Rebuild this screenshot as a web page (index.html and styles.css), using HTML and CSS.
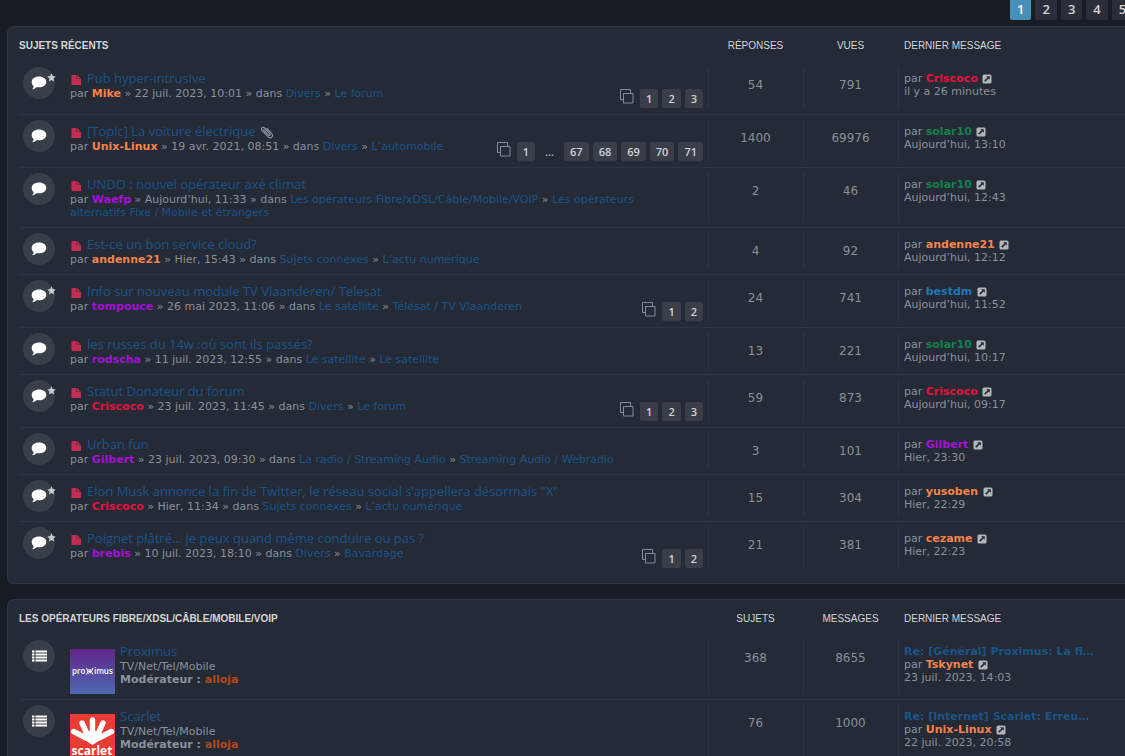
FILE: index.html
```html
<!DOCTYPE html>
<html lang="fr">
<head>
<meta charset="utf-8">
<title>Forum - Sujets récents</title>
<link rel="stylesheet" href="styles.css">
</head>
<body>
<svg class="sprite" aria-hidden="true">
  <symbol id="comment" viewBox="0 0 16 14"><path d="M8 .6c4.200 0 7.300 2.300 7.300 5.300s-3.100 5.300-7.300 5.300c-.7 0-1.400 0-2-.2-1.300 1.200-3 2-4.900 2.200.9-1 1.500-2.100 1.500-3.300C1.300 9 .7 7.500.7 5.900.7 2.900 3.800.6 8 .6z"/></symbol>
  <symbol id="star" viewBox="0 0 10 10"><path d="M5 .4l1.400 3 3.300.4-2.400 2.300.6 3.300L5 7.800 2.100 9.400l.6-3.300L.3 3.800l3.300-.4z"/></symbol>
  <symbol id="file" viewBox="0 0 10 12"><path d="M.5 1h5v4H10v6H.5zM6 1l3.800 3.500H6z"/></symbol>
  <symbol id="jump" viewBox="0 0 10 10"><rect x=".5" y=".5" width="9" height="9" rx="1.500"/><path d="M4.200 2.200h3.600v3.600L6.600 4.600 3.400 7.800 2.200 6.600l3.200-3.200z" fill="#242a36"/></symbol>
  <symbol id="pages" viewBox="0 0 15 15"><path d="M4 10.500H1.500v-10h10V4M4.500 4.500h9.500v9.500H4.500z" fill="none" stroke="currentColor"/></symbol>
  <symbol id="clip" viewBox="0 0 14 14"><path d="M3.400 4.500l5 5.600c1 1 2.300-.1 1.400-1.200L4.600 3C2.900 1.200.3 3.400 2 5.300l6 6.500c2.600 2.600 6-.4 3.800-3.100L6.600 3" fill="none" stroke="currentColor" stroke-width="1.200"/></symbol>
  <symbol id="list" viewBox="0 0 15 12"><path d="M0 .5h2.500v2H0zM3.500.5H15v2H3.500zM0 3.500h2.500v2H0zM3.500 3.500H15v2H3.500zM0 6.500h2.500v2H0zM3.500 6.500H15v2H3.500zM0 9.500h2.500v2H0zM3.500 9.500H15v2H3.500z"/></symbol>
</svg>

<nav class="pager" aria-label="Pages">
  <a class="current" href="#">1</a><a href="#">2</a><a href="#">3</a><a href="#">4</a><a href="#">5</a>
</nav>

<section class="card">
<table>
<colgroup><col class="c-icon"><col><col class="c-num"><col class="c-num"><col class="c-last"></colgroup>
<thead><tr><th class="heading" colspan="2">Sujets récents</th><th>Réponses</th><th>Vues</th><th class="left">Dernier message</th></tr></thead>
<tbody>
<tr><td class="status"><span class="disc"><svg class="i-comment"><use href="#comment"/></svg><svg class="i-star"><use href="#star"/></svg></span></td>
<td><div class="topic paged"><div class="text"><div class="title"><svg class="i-file"><use href="#file"/></svg><a href="#">Pub hyper-intrusive</a></div><div>par <a class="user orange" href="#">Mike</a> » 22 juil. 2023, 10:01 » dans <a href="#">Divers</a> » <a href="#">Le forum</a></div></div><div class="pages"><svg class="i-pages"><use href="#pages"/></svg><a href="#">1</a><a href="#">2</a><a href="#">3</a></div></div></td>
<td class="num">54</td><td class="num">791</td><td class="last">par <a class="user red" href="#">Criscoco</a> <svg class="i-jump"><use href="#jump"/></svg><br>il y a 26 minutes</td></tr>

<tr><td class="status"><span class="disc"><svg class="i-comment"><use href="#comment"/></svg></span></td>
<td><div class="topic paged"><div class="text"><div class="title"><svg class="i-file"><use href="#file"/></svg><a href="#">[Topic] La voiture électrique</a><svg class="i-clip"><use href="#clip"/></svg></div><div>par <a class="user orange" href="#">Unix-Linux</a> » 19 avr. 2021, 08:51 » dans <a href="#">Divers</a> » <a href="#">L’automobile</a></div></div><div class="pages"><svg class="i-pages"><use href="#pages"/></svg><a href="#">1</a><span>…</span><a href="#">67</a><a href="#">68</a><a href="#">69</a><a href="#">70</a><a href="#">71</a></div></div></td>
<td class="num">1400</td><td class="num">69976</td><td class="last">par <a class="user green" href="#">solar10</a> <svg class="i-jump"><use href="#jump"/></svg><br>Aujourd’hui, 13:10</td></tr>

<tr><td class="status"><span class="disc"><svg class="i-comment"><use href="#comment"/></svg></span></td>
<td><div class="topic"><div class="text"><div class="title"><svg class="i-file"><use href="#file"/></svg><a href="#">UNDO : nouvel opérateur axé climat</a></div><div>par <a class="user purple" href="#">Waefp</a> » Aujourd’hui, 11:33 » dans <a href="#">Les opérateurs Fibre/xDSL/Câble/Mobile/VOIP</a> » <a href="#">Les opérateurs alternatifs Fixe / Mobile et étrangers</a></div></div></div></td>
<td class="num">2</td><td class="num">46</td><td class="last">par <a class="user green" href="#">solar10</a> <svg class="i-jump"><use href="#jump"/></svg><br>Aujourd’hui, 12:43</td></tr>

<tr><td class="status"><span class="disc"><svg class="i-comment"><use href="#comment"/></svg></span></td>
<td><div class="topic"><div class="text"><div class="title"><svg class="i-file"><use href="#file"/></svg><a href="#">Est-ce un bon service cloud?</a></div><div>par <a class="user orange" href="#">andenne21</a> » Hier, 15:43 » dans <a href="#">Sujets connexes</a> » <a href="#">L’actu numérique</a></div></div></div></td>
<td class="num">4</td><td class="num">92</td><td class="last">par <a class="user orange" href="#">andenne21</a> <svg class="i-jump"><use href="#jump"/></svg><br>Aujourd’hui, 12:12</td></tr>

<tr><td class="status"><span class="disc"><svg class="i-comment"><use href="#comment"/></svg><svg class="i-star"><use href="#star"/></svg></span></td>
<td><div class="topic paged"><div class="text"><div class="title"><svg class="i-file"><use href="#file"/></svg><a href="#">Info sur nouveau module TV Vlaanderen/ Telesat</a></div><div>par <a class="user purple" href="#">tompouce</a> » 26 mai 2023, 11:06 » dans <a href="#">Le satellite</a> » <a href="#">Télésat / TV Vlaanderen</a></div></div><div class="pages"><svg class="i-pages"><use href="#pages"/></svg><a href="#">1</a><a href="#">2</a></div></div></td>
<td class="num">24</td><td class="num">741</td><td class="last">par <a class="user blue" href="#">bestdm</a> <svg class="i-jump"><use href="#jump"/></svg><br>Aujourd’hui, 11:52</td></tr>

<tr><td class="status"><span class="disc"><svg class="i-comment"><use href="#comment"/></svg></span></td>
<td><div class="topic"><div class="text"><div class="title"><svg class="i-file"><use href="#file"/></svg><a href="#">les russes du 14w :où sont ils passés?</a></div><div>par <a class="user purple" href="#">rodscha</a> » 11 juil. 2023, 12:55 » dans <a href="#">Le satellite</a> » <a href="#">Le satellite</a></div></div></div></td>
<td class="num">13</td><td class="num">221</td><td class="last">par <a class="user green" href="#">solar10</a> <svg class="i-jump"><use href="#jump"/></svg><br>Aujourd’hui, 10:17</td></tr>

<tr><td class="status"><span class="disc"><svg class="i-comment"><use href="#comment"/></svg><svg class="i-star"><use href="#star"/></svg></span></td>
<td><div class="topic paged"><div class="text"><div class="title"><svg class="i-file"><use href="#file"/></svg><a href="#">Statut Donateur du forum</a></div><div>par <a class="user red" href="#">Criscoco</a> » 23 juil. 2023, 11:45 » dans <a href="#">Divers</a> » <a href="#">Le forum</a></div></div><div class="pages"><svg class="i-pages"><use href="#pages"/></svg><a href="#">1</a><a href="#">2</a><a href="#">3</a></div></div></td>
<td class="num">59</td><td class="num">873</td><td class="last">par <a class="user red" href="#">Criscoco</a> <svg class="i-jump"><use href="#jump"/></svg><br>Aujourd’hui, 09:17</td></tr>

<tr><td class="status"><span class="disc"><svg class="i-comment"><use href="#comment"/></svg></span></td>
<td><div class="topic"><div class="text"><div class="title"><svg class="i-file"><use href="#file"/></svg><a href="#">Urban fun</a></div><div>par <a class="user purple" href="#">Gilbert</a> » 23 juil. 2023, 09:30 » dans <a href="#">La radio / Streaming Audio</a> » <a href="#">Streaming Audio / Webradio</a></div></div></div></td>
<td class="num">3</td><td class="num">101</td><td class="last">par <a class="user purple" href="#">Gilbert</a> <svg class="i-jump"><use href="#jump"/></svg><br>Hier, 23:30</td></tr>

<tr><td class="status"><span class="disc"><svg class="i-comment"><use href="#comment"/></svg><svg class="i-star"><use href="#star"/></svg></span></td>
<td><div class="topic"><div class="text"><div class="title"><svg class="i-file"><use href="#file"/></svg><a href="#">Elon Musk annonce la fin de Twitter, le réseau social s’appellera désormais "X"</a></div><div>par <a class="user red" href="#">Criscoco</a> » Hier, 11:34 » dans <a href="#">Sujets connexes</a> » <a href="#">L’actu numérique</a></div></div></div></td>
<td class="num">15</td><td class="num">304</td><td class="last">par <a class="user orange" href="#">yusoben</a> <svg class="i-jump"><use href="#jump"/></svg><br>Hier, 22:29</td></tr>

<tr><td class="status"><span class="disc"><svg class="i-comment"><use href="#comment"/></svg><svg class="i-star"><use href="#star"/></svg></span></td>
<td><div class="topic paged"><div class="text"><div class="title"><svg class="i-file"><use href="#file"/></svg><a href="#">Poignet plâtré... je peux quand même conduire ou pas ?</a></div><div>par <a class="user purple" href="#">brebis</a> » 10 juil. 2023, 18:10 » dans <a href="#">Divers</a> » <a href="#">Bavardage</a></div></div><div class="pages"><svg class="i-pages"><use href="#pages"/></svg><a href="#">1</a><a href="#">2</a></div></div></td>
<td class="num">21</td><td class="num">381</td><td class="last">par <a class="user orange" href="#">cezame</a> <svg class="i-jump"><use href="#jump"/></svg><br>Hier, 22:23</td></tr>
</tbody>
</table>
</section>

<section class="card forums">
<table>
<colgroup><col class="c-icon"><col><col class="c-num"><col class="c-num"><col class="c-last"></colgroup>
<thead><tr><th class="heading" colspan="2">Les opérateurs Fibre/xDSL/Câble/Mobile/VOIP</th><th>Sujets</th><th>Messages</th><th class="left">Dernier message</th></tr></thead>
<tbody>
<tr><td class="status"><span class="disc"><svg class="i-list"><use href="#list"/></svg></span></td>
<td><div class="forum">
<svg class="logo" viewBox="0 0 45 45" role="img" aria-label="proximus"><defs><linearGradient id="prox" x2="0" y2="1"><stop offset="0" stop-color="#63258a"/><stop offset="1" stop-color="#4c6ab0"/></linearGradient></defs><rect width="45" height="45" fill="url(#prox)"/><g class="logo-prox"><text x="2" y="25">pro</text><text x="24" y="25">imus</text></g><path d="M16.500 19q3 3.300 0 6.600M23 19q-3 3.300 0 6.600M17.500 22.300h4.500M18.500 20l2.600 4.800M21 20l-2.600 4.800" fill="none" stroke="#fff"/></svg>
<div class="text"><div class="title"><a href="#">Proximus</a></div><div>TV/Net/Tel/Mobile</div><div><strong>Modérateur : <a class="user mod" href="#">alloja</a></strong></div></div></div></td>
<td class="num">368</td><td class="num">8655</td><td class="last"><a class="user" href="#">Re: [Général] Proximus: La fi…</a><br>par <a class="user orange" href="#">Tskynet</a> <svg class="i-jump"><use href="#jump"/></svg><br>23 juil. 2023, 14:03</td></tr>

<tr><td class="status"><span class="disc"><svg class="i-list"><use href="#list"/></svg></span></td>
<td><div class="forum">
<svg class="logo" viewBox="0 0 45 45" role="img" aria-label="scarlet"><rect width="45" height="45" fill="#e83c35"/><path d="M3.500 17.500L16 24M12 9l6 13M22.500 6v16M33 9l-6 13M41.500 17.500L29 24" fill="none" stroke="#fff" stroke-width="5.400" stroke-linecap="round"/><path d="M13 20l5-3h9l5 3-1 5q-3.500 3-8.500 6-5-3-8.500-6z" fill="#fff"/><text class="logo-scarlet" x="22" y="41" text-anchor="middle">scarlet</text></svg>
<div class="text"><div class="title"><a href="#">Scarlet</a></div><div>TV/Net/Tel/Mobile</div><div><strong>Modérateur : <a class="user mod" href="#">alloja</a></strong></div></div></div></td>
<td class="num">76</td><td class="num">1000</td><td class="last"><a class="user" href="#">Re: [Internet] Scarlet: Erreu…</a><br>par <a class="user orange" href="#">Unix-Linux</a> <svg class="i-jump"><use href="#jump"/></svg><br>22 juil. 2023, 20:58</td></tr>
</tbody>
</table>
</section>
</body>
</html>
```
FILE: styles.css
```css
* { box-sizing: border-box; }
html { overflow: hidden; background: #181c25; }
body {
  margin: 0;
  padding-left: 7px;
  font: 11px/13px Verdana, "DejaVu Sans", sans-serif;
  color: #8a919c;
}
a { color: #1b5488; text-decoration: none; }
svg { fill: currentColor; flex: none; }
.sprite { display: none; }

.pager { display: flex; gap: 4px; width: 115px; height: 20px; margin: 0 0 6px auto; }
.pager a {
  flex: none;
  padding: 0 7px;
  border-radius: 0 0 2px 2px;
  background: #2b2e38;
  color: #d0d3d6;
  font: 600 13px/19px "Open Sans", sans-serif;
}
.pager .current { background: #4590bb; color: #fff; }

.card {
  margin-bottom: 15px;
  padding: 0 0 9px 11px;
  border: 1px solid #2f3541;
  border-right: 0;
  border-radius: 7px 0 0 7px;
  background: #242a36;
}
table { width: 100%; table-layout: fixed; border-collapse: separate; border-spacing: 0; }
.c-icon { width: 51px; }
.c-num { width: 95px; }
.c-last { width: 227px; }

th {
  height: 34px;
  padding: 2px 0 0;
  font: 10px/13px "Liberation Sans", Arial, sans-serif;
  color: #d3d6d6;
  text-align: center;
  text-transform: uppercase;
}
th.left, th.heading { text-align: left; }
th.left { padding-left: 6px; }
th.heading { font-weight: 700; }

td { padding: 9px 0 6px; border-top: 1px solid #2e3440; vertical-align: top; }
tbody tr:first-child td { border-top-color: transparent; }
.num, .last { background: linear-gradient(#2e3440, #2e3440) no-repeat left center / 1px calc(100% - 10px); }
.num { padding-top: 17px; font-size: 12px; text-align: center; }
.last { padding: 10px 0 5px 6px; white-space: nowrap; }
.forums td { padding-bottom: 5px; }
.user { font-weight: 700; }
.orange { color: #f5834a; }
.red { color: #e3123f; }
.green { color: #13804a; }
.purple { color: #a511d8; }
.blue { color: #1a78b8; }
.mod { color: #b2481a; }

.status { padding: 5px 0 0 4px; }
.disc {
  position: relative;
  display: flex;
  align-items: center;
  justify-content: center;
  width: 32px;
  height: 32px;
  border-radius: 50%;
  background: #393f49;
  color: #fff;
}
.i-comment { width: 16px; height: 14px; }
.i-star { position: absolute; top: 6px; right: -1px; width: 9px; height: 9px; color: #c6c9cd; }
.i-list { width: 15px; height: 12px; }

.topic { display: flex; align-items: flex-end; padding-right: 5px; }
.topic.paged { min-height: 37px; }
.text { flex: 1; align-self: flex-start; padding: 0 20px 2px 0; }
.title {
  display: flex;
  align-items: center;
  height: 15px;
  margin-bottom: 1px;
  font: 500 13px/15px "Open Sans", sans-serif;
}
.i-file { width: 10px; height: 12px; margin: 2px 6px 0 1px; color: #c02e52; }
.i-clip { width: 14px; height: 14px; margin-left: 5px; color: #8a919c; }
.i-jump { width: 10px; height: 10px; margin-left: 1px; vertical-align: -2px; color: #b4b7ba; }

.pages { display: flex; gap: 4px; font: 600 11px/19px "Open Sans", sans-serif; color: #b6babf; }
.pages a { padding: 0 6px; border-radius: 2px; background: #393e48; color: #d0d3d6; }
.pages span { width: 21px; text-align: center; }
.i-pages { width: 15px; height: 15px; margin-right: 2px; color: #858b96; }

.forum { display: flex; gap: 5px; }
.logo { width: 45px; height: 45px; margin-top: 5px; }
.logo-prox { fill: #fff; font: 600 8px "Open Sans", sans-serif; }
.logo-scarlet { fill: #fff; font: 700 12px "Open Sans", sans-serif; }
```
